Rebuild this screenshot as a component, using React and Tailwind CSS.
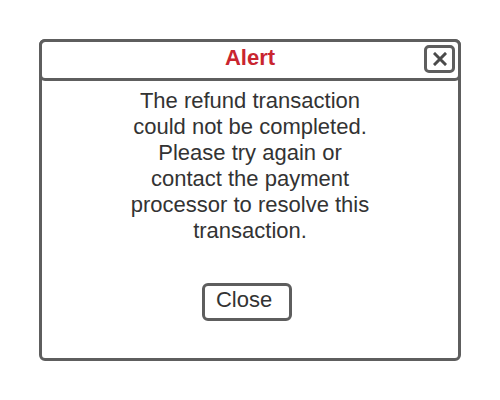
import React from "react";

const App = () => {
  return (
    <div className="w-[500px] h-[400px] bg-white pt-[39px] pl-[39px] font-['Liberation_Sans',Arial,sans-serif]">
      <div className="w-[422px] h-[322px] border-[3px] border-[#5e5e5e] rounded-[6px] flex flex-col">
        <div className="-mx-[3px] -mt-[3px] h-[42px] border-[3px] border-[#5e5e5e] rounded-[6px] flex items-center justify-center relative">
          <span className="text-[22px] font-bold text-[#c9252f] leading-none -mt-[4px]">Alert</span>
          <button className="absolute right-[3px] top-[3px] w-[31px] h-[28px] border-[3px] border-[#5e5e5e] rounded-[5px] flex items-center justify-center">
            <svg width="14" height="14" viewBox="0 0 14 14">
              <path d="M2 2 L12 12 M12 2 L2 12" stroke="#4a4a4a" strokeWidth="3" strokeLinecap="square" />
            </svg>
          </button>
        </div>
        <div className="flex flex-col items-center">
          <p className="w-[250px] mt-[7px] text-center text-[22px] leading-[26px] text-[#333]">
            The refund transaction could not be completed. Please try again or contact the payment processor to resolve this transaction.
          </p>
          <button className="mt-[39px] mr-[6px] w-[90px] h-[38px] border-[3px] border-[#5e5e5e] rounded-[6px] text-[22px] leading-none text-[#333] flex justify-center pt-[3px] pr-[6px]">
            Close
          </button>
        </div>
      </div>
    </div>
  );
};

export default App;
